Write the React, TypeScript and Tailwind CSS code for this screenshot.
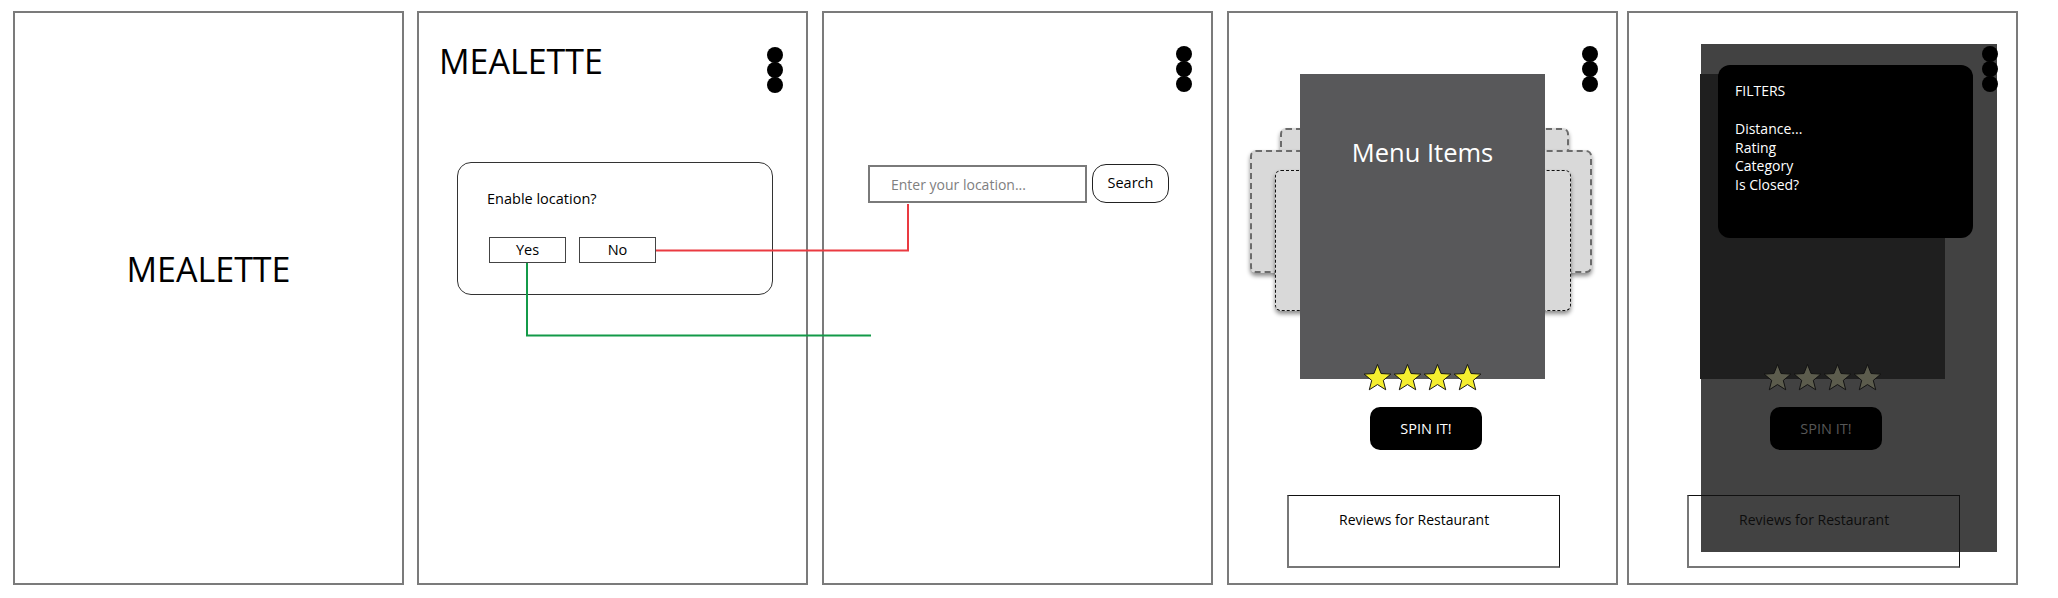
import React from 'react';

const Dots = () => (
  <div className="flex flex-col shrink-0">
    <span className="block shrink-0 w-4 h-4 rounded-full bg-black" />
    <span className="block shrink-0 w-4 h-4 rounded-full bg-black -mt-px" />
    <span className="block shrink-0 w-4 h-4 rounded-full bg-black -mt-px" />
  </div>
);

const Star = ({ fill }: { fill: string }) => (
  <svg width="29" height="29" viewBox="0 0 30 30">
    <polygon
      points="15,1.5 18.7,10.9 28.8,11.5 21,18 23.5,27.7 15,22.3 6.5,27.7 9,18 1.2,11.5 11.3,10.9"
      fill={fill}
      stroke="#111"
      strokeWidth="1"
      strokeLinejoin="round"
    />
  </svg>
);

const Panel = ({ className, children }: { className: string; children?: React.ReactNode }) => (
  <div className={`relative shrink-0 w-[391px] h-[574px] border-2 border-[#7b7b7b] bg-white ${className}`}>
    {children}
  </div>
);

// panel 4 and 5 share the same spinner screen, 5 is dimmed behind the filter menu
const SpinScreen = ({ dim }: { dim: boolean }) => (
  <div className="relative z-10 flex flex-col pt-[33px]">
    <div className="flex justify-end items-start pr-[18px] h-[28.4px]">
      <Dots />
    </div>

    <div className="relative mx-auto w-[245px] h-[305px]">
      {!dim && (
        <>
          <div className="absolute left-[-20px] top-[53.4px] w-[289px] h-[120px] rounded-[6px] border-2 border-dashed border-[#6b6b6b] bg-[#d9d9d9] shadow-[0_3px_4px_rgba(0,0,0,0.45)]" />
          <div className="absolute left-[-50px] top-[75.6px] w-[342px] h-[123.5px] rounded-[6px] border-2 border-dashed border-[#6b6b6b] bg-[#d9d9d9] shadow-[0_3px_4px_rgba(0,0,0,0.45)]" />
          <div className="absolute left-[-25px] top-[96px] w-[296px] h-[140.6px] rounded-[6px] border border-dashed border-[#111] bg-[#d9d9d9] shadow-[0_3px_4px_rgba(0,0,0,0.45)]" />
        </>
      )}
      {dim ? (
        <div className="relative h-full bg-[#1f1f1f]" />
      ) : (
        <div className="relative h-full bg-[#58585a] text-center pt-[65.5px] text-[25.5px] leading-none text-white">
          Menu Items
        </div>
      )}
    </div>

    <div className="relative mx-auto -mt-[16.5px] flex gap-px">
      {[0, 1, 2, 3].map((i) => (
        <Star key={i} fill={dim ? '#5c5c4d' : '#f5ee2f'} />
      ))}
    </div>

    <div
      className={`ml-[141px] mt-[15px] w-[112px] h-[43px] rounded-[10px] bg-black flex items-center justify-center text-[14.5px] ${
        dim ? 'text-[#575757]' : 'text-white'
      }`}
    >
      SPIN IT!
    </div>

    <div
      className={`ml-[58px] mt-[45px] w-[273px] h-[73px] border-t border-r border-l-2 border-b-2 border-t-[#111] border-r-[#111] border-l-[#777] border-b-[#777] pl-[50px] pt-[15.3px] text-[14px] leading-[18.5px] ${
        dim ? 'text-[#0d0d0d]' : 'text-black'
      }`}
    >
      Reviews for Restaurant
    </div>
  </div>
);

const App = () => {
  return (
    <div className="relative w-[2058px] h-[598px] bg-white flex items-start pt-[11px] font-['Open_Sans',sans-serif] text-black overflow-hidden">
      {/* Splash */}
      <Panel className="ml-[13px]">
        <div className="flex flex-col items-center pt-[239px]">
          <div className="text-[34px] leading-none">MEALETTE</div>
        </div>
      </Panel>

      {/* Location prompt */}
      <Panel className="ml-[13px]">
        <div className="flex flex-col pt-[31px] pl-[20px] pr-[23px]">
          <div className="flex justify-between items-start h-[50px]">
            <div className="text-[34px] leading-none">MEALETTE</div>
            <div className="mt-[2.5px]">
              <Dots />
            </div>
          </div>
          <div className="ml-[18px] mt-[68px] w-[316px] h-[133px] rounded-[14px] border border-[#333] pl-[29px] pt-[26px]">
            <div className="text-[14.5px] leading-[20px]">Enable location?</div>
            <div className="ml-[2px] mt-[28px] flex gap-[13px]">
              <div className="w-[77px] h-[26px] border border-[#444] flex items-center justify-center text-[14.5px]">
                Yes
              </div>
              <div className="w-[77px] h-[26px] border border-[#444] flex items-center justify-center text-[14.5px]">
                No
              </div>
            </div>
          </div>
        </div>
      </Panel>

      {/* Manual location */}
      <Panel className="ml-[14px]">
        <div className="flex flex-col pt-[33px] pl-[44px] pr-[19px]">
          <div className="flex justify-end items-start">
            <Dots />
          </div>
          <div className="mt-[72px] flex items-end gap-[5px]">
            <input
              readOnly
              placeholder="Enter your location..."
              className="w-[219px] h-[38px] border-2 border-[#7a7a7a] pl-[21px] text-[14px] outline-none placeholder:text-[#808080]"
            />
            <div className="w-[77px] h-[39px] rounded-[14px] border border-[#222] flex items-center justify-center pb-[2px] text-[14.5px]">
              Search
            </div>
          </div>
        </div>
      </Panel>

      {/* Spinner */}
      <Panel className="ml-[14px]">
        <SpinScreen dim={false} />
      </Panel>

      {/* Spinner with filter menu open */}
      <Panel className="ml-[9px]">
        <div className="absolute left-[72px] top-[31px] w-[296px] h-[507.5px] bg-[#424242]" />
        <SpinScreen dim={true} />
        <div className="absolute z-20 left-[89px] top-[52px] w-[255px] h-[173px] rounded-[12px] bg-black pl-[17px] pt-[17px] text-white text-[14px] leading-[18.5px]">
          <div>FILTERS</div>
          <div className="mt-[19.8px]">
            <div>Distance...</div>
            <div>Rating</div>
            <div>Category</div>
            <div>Is Closed?</div>
          </div>
        </div>
      </Panel>

      {/* flow connectors */}
      <svg className="absolute left-0 top-0 pointer-events-none" width="2058" height="598">
        <path d="M656 250.5 H908 V204" fill="none" stroke="#ea3a41" strokeWidth="2" />
        <path d="M527 263 V335.5 H871" fill="none" stroke="#139a48" strokeWidth="2" />
      </svg>
    </div>
  );
};

export default App;
